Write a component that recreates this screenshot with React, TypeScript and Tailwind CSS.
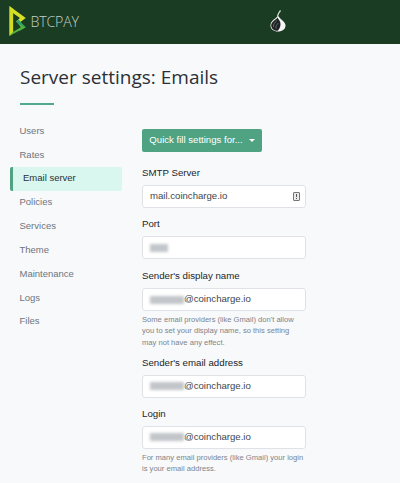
const NAV = ["Users", "Rates", "Email server", "Policies", "Services", "Theme", "Maintenance", "Logs", "Files"];

const Logo = () => (
  <svg width="18" height="31" viewBox="0 0 18 32" className="shrink-0 -mt-[2px]">
    <path d="M0 0 L4 3 L4 28 L0 31 Z" fill="#cfdc22" />
    <path d="M0 0 L17 12.5 L9.5 18 L7 16 L11 12.5 L4 7.5 Z" fill="#d5e028" />
    <path d="M7 16 L9.5 14 L17 22 L10 26 L12 22 Z" fill="#2f9e6c" />
    <path d="M9.5 18 L17 22 L0 31 L4 26.5 L12 22 Z" fill="#52b23c" />
  </svg>
);

const Onion = () => (
  <svg width="16" height="22" viewBox="0 0 16 22">
    <path d="M10 0 C9 2 7 4 7 6.5 L8.2 7 C8.2 5 9.2 3 11 1 Z" fill="#e5e7e4" />
    <path d="M7.2 6.5 C5 9.5 0.5 10.5 0.5 15.5 C0.5 19 3.5 21.5 8 21.5 C12.5 21.5 15.5 19 15.5 15.5 C15.5 11.5 10.5 10 8.8 6.5 Z" fill="#f4f5f4" />
    <path d="M7.5 7.5 C6 10 1.2 11.5 1.2 15.5 C1.2 18.5 4 20.8 7.5 20.8 C9.5 19 10.5 17 10.5 14 C10.5 11 8.5 9.5 7.5 7.5 Z" fill="#1f2326" />
    <path d="M3.5 17 C3 14 5 12.5 7 10.5 M6 18.5 C5.5 16 7 14.5 8.5 13" stroke="#7d8286" strokeWidth="0.7" fill="none" />
  </svg>
);

const Field = ({ label, value, blurWidth, alert, help, className }: { label: string; value?: string; blurWidth?: string; alert?: boolean; help?: string[]; className?: string }) => (
  <div className={className}>
    <label className="block text-[9.7px] leading-[14px] text-[#212529] mb-[5px]">{label}</label>
    <div className="h-[23px] w-[164px] flex items-center pl-[7px] pr-[4px] bg-white border border-[#dfe3e8] rounded-[3px] text-[9.6px] text-[#40464d]">
      {blurWidth && <span className={`${blurWidth} h-[8px] bg-[#c2c5c9] blur-[1.5px] shrink-0`} />}
      <span>{value}</span>
      {alert && (
        <span className="ml-auto mr-[1px] w-[7px] h-[9px] border border-[#777] rounded-[1px] flex flex-col items-center bg-[#e9e9e9]">
          <span className="w-[1px] h-[3px] bg-[#555] mt-[1px]" />
          <span className="w-[1px] h-[1px] bg-[#555] mt-[0.5px]" />
        </span>
      )}
    </div>
    {help && (
      <div className="mt-[3px] text-[7.6px] leading-[11.3px] text-[#7d848b]">
        {help.map((l) => (
          <div key={l}>{l}</div>
        ))}
      </div>
    )}
  </div>
);

export default function App() {
  return (
    <div className="w-[400px] h-[483px] overflow-hidden bg-[#f8f9fb] font-['Liberation_Sans',sans-serif]">
      <header className="h-[44px] bg-[#1a3c23] flex items-center pl-[9px] relative">
        <Logo />
        <span className="ml-[3.5px] text-[14.2px] tracking-[-0.2px] font-['Open_Sans',sans-serif] font-light text-[#c3d0c8]">BTCPAY</span>
        <span className="absolute left-[270px] top-[10px]">
          <Onion />
        </span>
      </header>

      <div className="pl-[20px] pt-[18px]">
        <h1 className="font-['Open_Sans',sans-serif] text-[19px] leading-[30px] text-[#2b3036]">Server settings: Emails</h1>
        <div className="mt-[11px] w-[34px] h-[2px] bg-[#51a88f]" />
      </div>

      <div className="flex mt-[14px]">
        <nav className="w-[112px] ml-[10px] shrink-0 flex flex-col text-[9.5px] text-[#6c757d]">
          {NAV.map((n) =>
            n === "Email server" ? (
              <div key={n} className="h-[24px] flex items-center pl-[10px] bg-[#d9f7ee] border-l-[3px] border-[#4fa383] rounded-[2px] text-[#2b3036]">
                {n}
              </div>
            ) : (
              <div key={n} className="h-[23.8px] flex items-center pl-[9.5px]">
                {n}
              </div>
            )
          )}
        </nav>

        <main className="ml-[20px] pt-[10px]">
          <button className="h-[23px] w-[120px] flex items-center justify-center gap-[6px] bg-[#4fa383] rounded-[2px] text-[9.6px] text-white">
            Quick fill settings for...
            <span className="w-0 h-0 border-x-[3.5px] border-x-transparent border-t-[3.5px] border-t-white" />
          </button>
          <Field className="mt-[14px]" label="SMTP Server" value="mail.coincharge.io" alert />
          <Field className="mt-[9px]" label="Port" blurWidth="w-[18px]" />
          <Field className="mt-[10px]" label="Sender's display name" blurWidth="w-[34px]" value="@coincharge.io" help={["Some email providers (like Gmail) don't allow", "you to set your display name, so this setting", "may not have any effect."]} />
          <Field className="mt-[8px]" label="Sender's email address" blurWidth="w-[34px]" value="@coincharge.io" />
          <Field className="mt-[9px]" label="Login" blurWidth="w-[34px]" value="@coincharge.io" help={["For many email providers (like Gmail) your login", "is your email address."]} />
        </main>
      </div>
    </div>
  );
}
